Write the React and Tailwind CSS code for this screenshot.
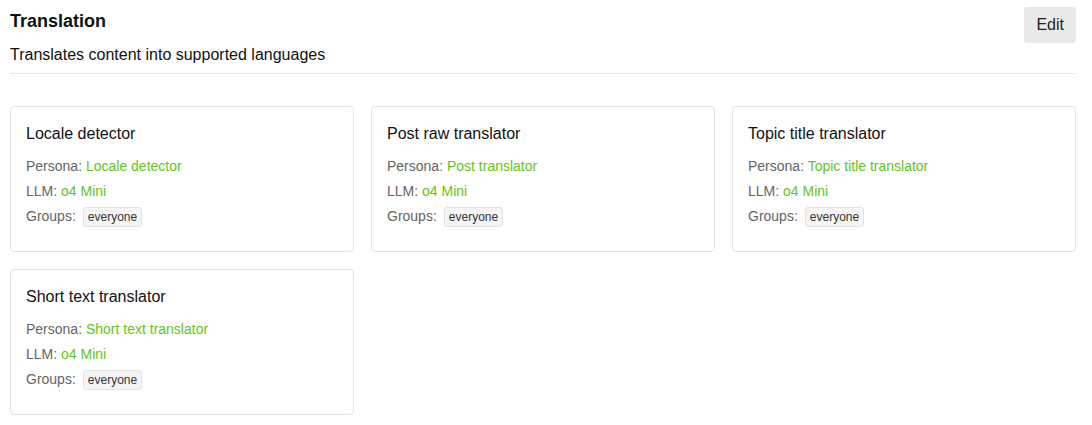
import React from 'react';

const tasks = [
  { name: 'Locale detector', persona: 'Locale detector' },
  { name: 'Post raw translator', persona: 'Post translator' },
  { name: 'Topic title translator', persona: 'Topic title translator' },
  { name: 'Short text translator', persona: 'Short text translator' },
];

const TaskCard = ({ task }) => (
  <div className="border border-[#e4e4e4] rounded-[4px] bg-white px-[15px] pt-[15px] pb-[22px]">
    <h3 className="text-[16px] leading-[24px] text-[#111]">{task.name}</h3>
    <div className="mt-2 text-[14px] leading-[25px] text-[#646464]">
      <div>
        Persona: <span className="text-[#65c31a]">{task.persona}</span>
      </div>
      <div>
        LLM: <span className="text-[#65c31a]">o4 Mini</span>
      </div>
      <div className="flex items-center">
        <span>Groups:</span>
        <span className="ml-[7px] text-[12px] leading-[18px] text-[#333] bg-[#f5f5f5] border border-[#e2e2e2] rounded-[3px] px-[4px]">
          everyone
        </span>
      </div>
    </div>
  </div>
);

export default function App() {
  return (
    <div className="bg-white w-[1092px] min-h-[425px] pl-[10px] pr-[16px]" style={{ fontFamily: '"Liberation Sans", Arial, sans-serif' }}>
      <div className="flex justify-between items-start border-b border-[#e6e6e6] pb-[7px]">
        <div className="pt-[9px]">
          <h2 className="text-[18px] leading-[24px] font-bold text-[#111]">Translation</h2>
          <p className="mt-[11px] text-[16px] leading-[22px] text-[#111]">Translates content into supported languages</p>
        </div>
        <button className="mt-[7px] h-[36px] px-[12px] bg-[#e9e9e9] rounded-[3px] text-[16px] text-[#222]">Edit</button>
      </div>
      <div className="grid grid-cols-3 gap-[17px] mt-[32px]">
        {tasks.map((t) => (
          <TaskCard key={t.name} task={t} />
        ))}
      </div>
    </div>
  );
}
